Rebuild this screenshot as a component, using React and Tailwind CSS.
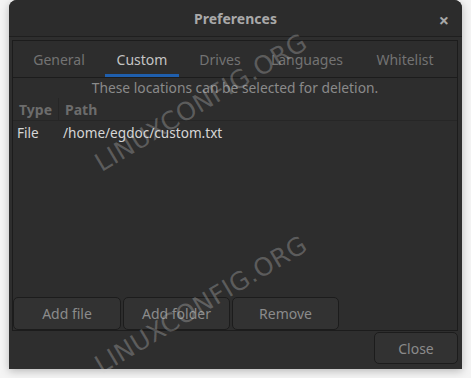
import React from 'react'

const tabs = [
  { label: 'General', w: 'w-[92px]' },
  { label: 'Custom', w: 'w-[74px]', active: true },
  { label: 'Drives', w: 'w-[82px]' },
  { label: 'Languages', w: 'w-[92px]' },
  { label: 'Whitelist', w: 'w-[104px]' },
]

function Watermark({ className }) {
  return (
    <div
      className={`pointer-events-none absolute whitespace-nowrap text-[25px] tracking-[0.5px] text-[rgba(215,215,215,0.28)] [font-family:'DejaVu_Sans',sans-serif] -rotate-[31deg] ${className}`}
    >
      LINUXCONFIG.ORG
    </div>
  )
}

export default function App() {
  return (
    <div className="relative w-[471px] h-[378px] overflow-hidden bg-[#f4f4f4] pl-[9px] [font-family:'Noto_Sans',sans-serif]">
      <div className="w-[453px] h-[369px] flex flex-col rounded-t-[8px] bg-[#2e2e2e] shadow-[0_2px_8px_rgba(0,0,0,0.25)]">
        {/* Title bar */}
        <div className="relative h-[37px] shrink-0 flex items-center justify-center border-b border-[#1f1f1f] rounded-t-[8px] bg-[#2c2c2c]">
          <span className="text-[14px] font-bold text-[#a9a9a9]">Preferences</span>
          <span className="absolute right-[13px] top-[7px] text-[18px] font-bold text-[#a8a8a8]">×</span>
        </div>

        {/* Notebook */}
        <div className="mt-[3px] ml-[3px] mr-[4px] h-[291px] flex flex-col border border-[#1c1c1c] bg-[#2d2d2d]">
          <div className="h-[37px] shrink-0 flex border-b border-[#1c1c1c]">
            {tabs.map((t) => (
              <div
                key={t.label}
                className={`${t.w} relative flex items-center justify-center text-[14px] ${
                  t.active ? 'text-[#c4c4c4]' : 'text-[#737373]'
                }`}
              >
                {t.label}
                {t.active && <div className="absolute left-0 right-0 bottom-0 h-[3px] bg-[#1f5fae]" />}
              </div>
            ))}
          </div>

          <div className="h-[20px] flex items-center justify-center text-[13.8px] text-[#8a8a8a]">
            These locations can be selected for deletion.
          </div>

          {/* Tree header */}
          <div className="h-[23px] flex items-center border-b border-[#262626] text-[14px] font-bold text-[#6c6c6c]">
            <div className="w-[46px] pl-[6px] border-r border-[#262626] h-full flex items-center">Type</div>
            <div className="pl-[6px]">Path</div>
          </div>

          <div className="h-[25px] flex items-center text-[13.6px] text-[#d6d6d6]">
            <div className="w-[50px] pl-[4px]">File</div>
            <div>/home/egdoc/custom.txt</div>
          </div>

          <div className="flex-1" />

          <div className="flex gap-[2px]">
            {['Add file', 'Add folder', 'Remove'].map((b, i) => (
              <button
                key={b}
                className={`${i === 0 ? 'w-[108px]' : 'w-[107px]'} h-[33px] rounded-[5px] border border-[#1c1c1c] bg-[#323232] text-[14px] text-[#8b8b8b]`}
              >
                {b}
              </button>
            ))}
          </div>
        </div>

        <div className="flex justify-end mr-[4px] mt-[1px]">
          <button className="w-[84px] h-[32px] rounded-[5px] border border-[#1c1c1c] bg-[#323232] text-[14px] text-[#8b8b8b]">
            Close
          </button>
        </div>
      </div>

      <Watermark className="left-[80px] top-[84px]" />
      <Watermark className="left-[80px] top-[286px]" />
    </div>
  )
}
